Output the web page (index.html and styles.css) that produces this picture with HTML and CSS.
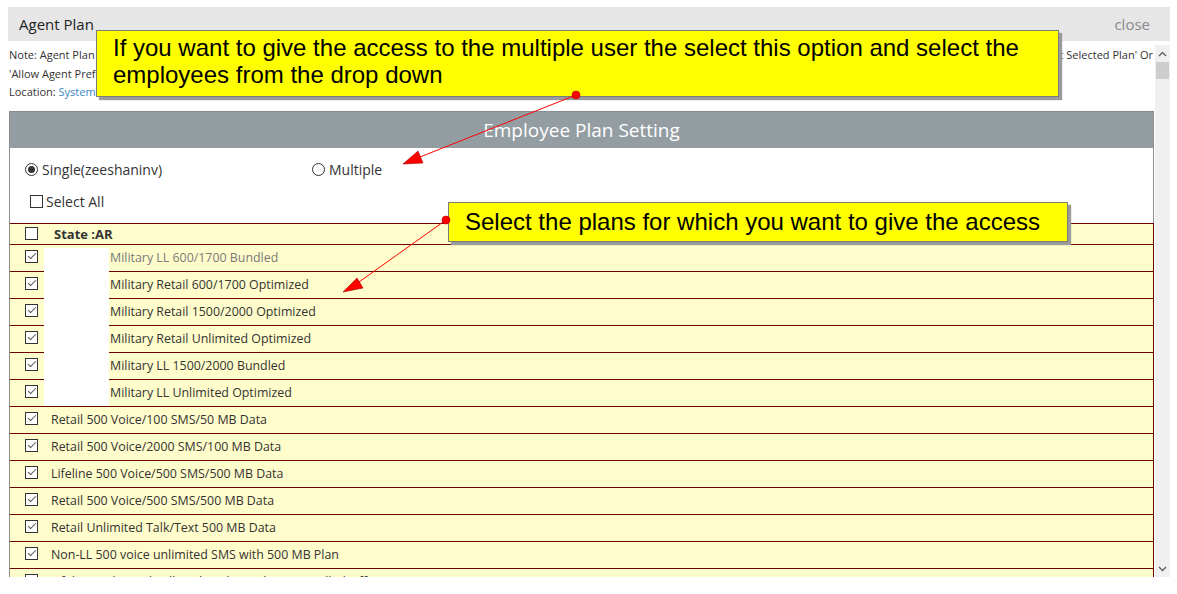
FILE: index.html
```html
<!DOCTYPE html>
<html>
<head>
<meta charset="utf-8">
<title>Agent Plan</title>
<link rel="stylesheet" href="styles.css">
</head>
<body>

<div class="modal">
  <div class="modal-head">
    <span class="modal-title">Agent Plan</span>
    <a class="modal-close">close</a>
  </div>

  <div class="modal-body">
    <div class="modal-content">
      <div class="note">
        <div class="note-first">
          <span>Note: Agent Plan setting is used to restrict the agent to see only the assigned plans at the time of activation.</span>
          <span>To use this feature enable the setting 'Allow Agent Selected Plan' Or</span>
        </div>
        <div>'Allow Agent Preferred Plan' from the system settings and then assign the plans to the employees.</div>
        <div>Location: <a class="link">System Settings</a> &gt; Agent Settings &gt; Allow_Agent_Plan &gt; Employee_Plan_Setting (Yes/No)</div>
      </div>

      <div class="panel">
        <div class="panel-head">Employee Plan Setting</div>

        <div class="options">
          <div class="opt-row">
            <label class="opt opt-single"><input class="rad" type="radio" name="mode" checked>Single(zeeshaninv)</label>
            <label class="opt"><input class="rad" type="radio" name="mode">Multiple</label>
          </div>
          <div class="opt-row select-all">
            <label class="opt"><input class="chk" type="checkbox">Select All</label>
          </div>
        </div>

        <div class="plans">
          <div class="plan-row state-row">
            <input class="chk" type="checkbox">
            <span class="state-name">State :AR</span>
          </div>
          <div class="plan-row sub"><input class="chk" type="checkbox" checked><span class="plan-name muted">Military LL 600/1700 Bundled</span></div>
          <div class="plan-row sub"><input class="chk" type="checkbox" checked><span class="plan-name">Military Retail 600/1700 Optimized</span></div>
          <div class="plan-row sub"><input class="chk" type="checkbox" checked><span class="plan-name">Military Retail 1500/2000 Optimized</span></div>
          <div class="plan-row sub"><input class="chk" type="checkbox" checked><span class="plan-name">Military Retail Unlimited Optimized</span></div>
          <div class="plan-row sub"><input class="chk" type="checkbox" checked><span class="plan-name">Military LL 1500/2000 Bundled</span></div>
          <div class="plan-row sub"><input class="chk" type="checkbox" checked><span class="plan-name">Military LL Unlimited Optimized</span></div>
          <div class="plan-row"><input class="chk" type="checkbox" checked><span class="plan-name">Retail 500 Voice/100 SMS/50 MB Data</span></div>
          <div class="plan-row"><input class="chk" type="checkbox" checked><span class="plan-name">Retail 500 Voice/2000 SMS/100 MB Data</span></div>
          <div class="plan-row"><input class="chk" type="checkbox" checked><span class="plan-name">Lifeline 500 Voice/500 SMS/500 MB Data</span></div>
          <div class="plan-row"><input class="chk" type="checkbox" checked><span class="plan-name">Retail 500 Voice/500 SMS/500 MB Data</span></div>
          <div class="plan-row"><input class="chk" type="checkbox" checked><span class="plan-name">Retail Unlimited Talk/Text 500 MB Data</span></div>
          <div class="plan-row"><input class="chk" type="checkbox" checked><span class="plan-name">Non-LL 500 voice unlimited SMS with 500 MB Plan</span></div>
          <div class="plan-row"><input class="chk" type="checkbox" checked><span class="plan-name">Lifeline Unlimited Talk with Unlimited Text Bundled Offer</span></div>

          <!-- hidden part of the screenshot -->
          <div class="redact"></div>
        </div>
      </div>
    </div>

    <div class="scrollbar">
      <div class="sb-btn">
        <svg width="9" height="6" viewBox="0 0 9 6"><path d="M1 5 L4.5 1.5 L8 5" fill="none" stroke="#606060" stroke-width="1.4"/></svg>
      </div>
      <div class="sb-thumb"></div>
      <div class="sb-track"></div>
      <div class="sb-btn">
        <svg width="9" height="6" viewBox="0 0 9 6"><path d="M1 1 L4.5 4.5 L8 1" fill="none" stroke="#606060" stroke-width="1.4"/></svg>
      </div>
    </div>
  </div>
</div>

<!-- annotations -->
<div class="callout callout-multi">If you want to give the access to the multiple user the select this option and select the<br>employees from the drop down</div>
<div class="callout callout-plans">Select the plans for which you want to give the access</div>

<svg class="arrows" width="1177" height="594" viewBox="0 0 1177 594">
  <line x1="576" y1="95" x2="420" y2="157" stroke="#ff0000" stroke-width="1"/>
  <polygon points="403,164 418,151 423,163" fill="#ff0000" stroke="#a00000" stroke-width="0.6"/>
  <circle cx="576" cy="95" r="4" fill="#ff0000" stroke="#b00000" stroke-width="0.6"/>

  <line x1="446" y1="220" x2="359" y2="282" stroke="#ff0000" stroke-width="1"/>
  <polygon points="343,292 357,278 363,288" fill="#ff0000" stroke="#a00000" stroke-width="0.6"/>
  <circle cx="446" cy="220" r="4" fill="#ff0000" stroke="#b00000" stroke-width="0.6"/>
</svg>

</body>
</html>
```

FILE: styles.css
```css
body {
  margin: 0;
  padding: 7px 7px 0 8px;
  background: #fff;
  font-family: "Open Sans", "Noto Sans", sans-serif;
  color: #333;
  position: relative;
  height: 587px;
  overflow: hidden;
}

/* modal window */
.modal {
  width: 1162px;
}

.modal-head {
  height: 34px;
  background-color: #e6e6e6;
  display: flex;
  align-items: center;
  justify-content: space-between;
  padding: 0 20px 0 11px;
}

.modal-title {
  font-size: 15px;
  color: #222;
}

.modal-close {
  font-size: 15px;
  color: #8a8a8a;
  cursor: pointer;
}

.modal-body {
  margin-top: 4px;
  height: 532px;
  display: flex;
}

.modal-content {
  flex: 1;
  overflow: hidden;
  padding-left: 1px;
}

/* fake scrollbar */
.scrollbar {
  width: 15px;
  background-color: #f0f0f0;
  display: flex;
  flex-direction: column;
}

.sb-btn {
  height: 17px;
  display: flex;
  align-items: center;
  justify-content: center;
}

.sb-thumb {
  height: 17px;
  margin: 0 1px;
  background-color: #cdcdcd;
}

.sb-track {
  flex: 1;
}

/* note text */
.note {
  font-size: 11px;
  line-height: 18.5px;
  padding-top: 1px;
  margin-bottom: 9px;
  white-space: nowrap;
}

.note-first {
  display: flex;
  justify-content: space-between;
  overflow: hidden;
  padding-right: 2px;
}

.link {
  color: #3a88c8;
}

/* employee plan panel */
.panel {
  width: 1145px;
  border-left: 1px solid #8e8e8e;
  box-sizing: border-box;
}

.panel-head {
  height: 37px;
  background-color: #949da2;
  border-top: 1px solid #848c90;
  border-right: 1px solid #8e8e8e;
  box-sizing: border-box;
  color: #fff;
  font-size: 19px;
  text-align: center;
  line-height: 36px;
}

.options {
  border-right: 1px solid #8e8e8e;
  padding: 12px 0 11px 15px;
  display: flex;
  flex-direction: column;
  gap: 12px;
}

.opt-row {
  display: flex;
  height: 20px;
  align-items: center;
}

.opt {
  display: flex;
  align-items: center;
  gap: 4px;
  font-size: 14px;
  color: #333;
}

.opt-single {
  width: 287px;
}

.select-all {
  padding-left: 5px;
}

.select-all .opt {
  gap: 3px;
}

/* inputs */
.rad {
  -webkit-appearance: none;
  appearance: none;
  width: 13px;
  height: 13px;
  margin: 0;
  border: 1px solid #333;
  border-radius: 50%;
  background: #fff;
  position: relative;
}

.rad:checked::after {
  content: "";
  position: absolute;
  left: 2px;
  top: 2px;
  width: 7px;
  height: 7px;
  border-radius: 50%;
  background-color: #333;
}

.chk {
  -webkit-appearance: none;
  appearance: none;
  width: 13px;
  height: 13px;
  margin: 0;
  border: 1px solid #333;
  background: #fff;
  position: relative;
  flex-shrink: 0;
}

.chk:checked::after {
  content: "";
  position: absolute;
  left: 4px;
  top: 0px;
  width: 3px;
  height: 7px;
  border: solid #555;
  border-width: 0 1px 1px 0;
  transform: rotate(45deg);
}

/* plans list */
.plans {
  position: relative;
  border-right: 1px solid #6e0000;
  background-color: #fffdcb;
}

.plan-row {
  height: 26px;
  display: flex;
  align-items: center;
  padding-left: 15px;
  border-bottom: 1px solid #6e0000;
  font-size: 12.4px;
}

.plan-row .chk {
  margin-top: -2px;
}

.state-row {
  height: 20px;
  border-top: 1px solid #6e0000;
}

.state-row .chk {
  margin-top: 0;
}

.state-name {
  margin-left: 16px;
  font-weight: bold;
  font-size: 13px;
  color: #333;
}

.plan-name {
  margin-left: 13px;
  color: #333;
}

.sub .plan-name {
  margin-left: 72px;
}

.muted {
  color: #7a7a7a;
}

.redact {
  position: absolute;
  left: 34px;
  top: 25px;
  width: 65px;
  height: 158px;
  background: #fff;
}

/* annotation callouts */
.callout {
  position: absolute;
  background-color: #ffff00;
  border: 1px solid #7c7c7c;
  box-shadow: 3px 3px 1px #9a9a9a;
  font-family: "Liberation Sans", Arial, sans-serif;
  font-size: 24px;
  color: #000;
  white-space: nowrap;
  box-sizing: border-box;
}

.callout-multi {
  left: 96px;
  top: 30px;
  width: 963px;
  height: 67px;
  padding: 3px 0 0 16px;
  line-height: 27px;
}

.callout-plans {
  left: 448px;
  top: 202px;
  width: 620px;
  height: 40px;
  padding-left: 16px;
  line-height: 37px;
}

.arrows {
  position: absolute;
  left: 0;
  top: 0;
  pointer-events: none;
}
```
